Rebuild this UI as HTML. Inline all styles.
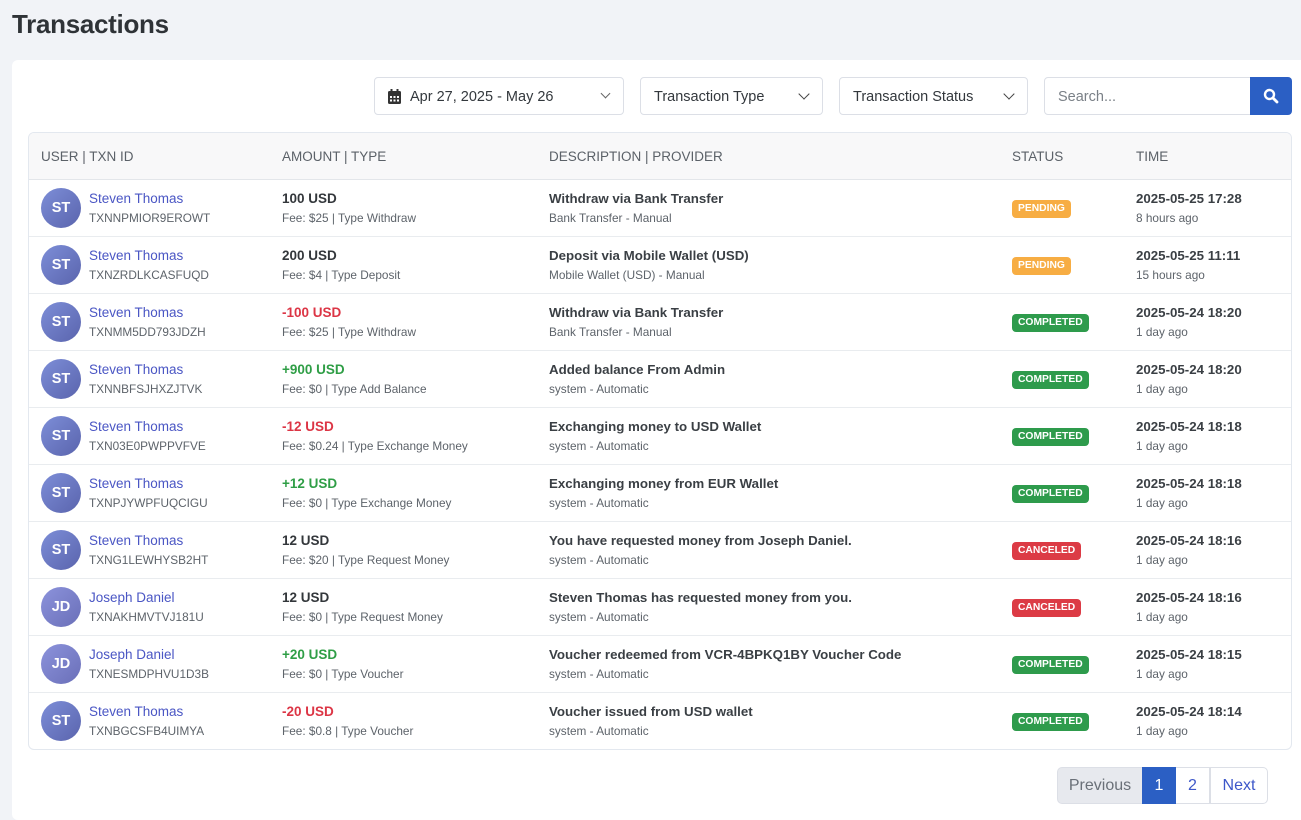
<!DOCTYPE html>
<html><head><meta charset="utf-8"><style>
*{box-sizing:border-box;margin:0;padding:0}
body{width:1301px;height:811px;overflow:hidden;background:#f1f3f7;font-family:"Liberation Sans",sans-serif;color:#3a3f45;position:relative}
h1{position:absolute;left:12px;top:9px;font-size:26px;font-weight:700;color:#2f3337;letter-spacing:-0.3px}
.card{position:absolute;left:12px;top:60px;width:1300px;height:760px;background:#fff;border-radius:6px}
.f{position:absolute;top:77px;height:38px;border:1px solid #dcdfe6;border-radius:4px;background:#fff;font-size:14.5px;color:#33383d;line-height:38px;padding-left:13px}
.f .ch{position:absolute;right:14px;top:12px;width:8px;height:8px;border-right:1.6px solid #444;border-bottom:1.6px solid #444;transform:rotate(45deg)}
.tbl{position:absolute;left:28px;top:132px;width:1264px;height:618px;border:1px solid #e3e8ef;border-radius:6px;overflow:hidden}
.hd{height:47px;background:#f8f8f9;border-bottom:1px solid #e3e6ea;position:relative;font-size:13.5px;color:#5b6168}
.hd span{position:absolute;top:16px}
.row{height:57px;border-bottom:1px solid #e9ecef;position:relative}
.row:last-child{border-bottom:none}
.av{position:absolute;left:12px;top:8px;width:40px;height:40px;border-radius:50%;background:linear-gradient(135deg,#7d8ed8,#5a64ad);color:#fff;font-weight:700;font-size:14.5px;text-align:center;line-height:40px}
.c{position:absolute;top:10px;white-space:nowrap}
.t1{font-size:13.5px;line-height:18px}
.t2{font-size:11.8px;line-height:18px;color:#5d636a;margin-top:1px}
.nm{color:#4a56c4}
.b{font-weight:700;color:#33373b}
.d{font-weight:600;color:#3a3f44;font-size:13.3px}
.g{color:#2f9e46;font-weight:700}
.r{color:#dc3545;font-weight:700}
.bd{position:absolute;left:983px;top:20px;height:18px;padding:0 6px;border-radius:4px;color:#fff;font-size:10.3px;font-weight:700;line-height:18px}
.P{background:#f7ad43}.C{background:#2e9b4c}.X{background:#dc3b45}
.pg{position:absolute;top:767px;height:37px;border:1px solid #dcdfe6;font-size:16px;line-height:35px;text-align:center;color:#3d57c9}
</style></head><body>
<h1>Transactions</h1>
<div class="card"></div>
<div class="f" style="left:374px;width:250px;padding-left:35px"><svg style="position:absolute;left:13px;top:11px" width="13" height="15" viewBox="0 0 13 15"><rect x="0" y="2" width="13" height="13" rx="1.5" fill="#333"/><rect x="2.5" y="0" width="2" height="4" fill="#333"/><rect x="8.5" y="0" width="2" height="4" fill="#333"/><g fill="#fff"><rect x="2" y="7" width="2" height="2"/><rect x="5.5" y="7" width="2" height="2"/><rect x="9" y="7" width="2" height="2"/><rect x="2" y="10.5" width="2" height="2"/><rect x="5.5" y="10.5" width="2" height="2"/><rect x="9" y="10.5" width="2" height="2"/></g></svg>Apr 27, 2025 - May 26<span class="ch" style="border-color:#666;width:7px;height:7px;border-width:0 1.2px 1.2px 0"></span></div>
<div class="f" style="left:640px;width:183px">Transaction Type<span class="ch"></span></div>
<div class="f" style="left:839px;width:189px">Transaction Status<span class="ch"></span></div>
<div class="f" style="left:1044px;width:210px;color:#7a8087;border-radius:4px 0 0 4px">Search...</div>
<div style="position:absolute;left:1250px;top:77px;width:42px;height:38px;background:#2b5fc4;border-radius:0 4px 4px 0"><svg style="position:absolute;left:13px;top:11px" width="16" height="16" viewBox="0 0 16 16"><circle cx="6.5" cy="6.5" r="4.5" stroke="#fff" stroke-width="2.4" fill="none"/><line x1="10" y1="10" x2="14" y2="14" stroke="#fff" stroke-width="2.8" stroke-linecap="round"/></svg></div>
<div class="tbl">
<div class="hd"><span style="left:12px">USER | TXN ID</span><span style="left:253px">AMOUNT | TYPE</span><span style="left:520px">DESCRIPTION | PROVIDER</span><span style="left:983px">STATUS</span><span style="left:1107px">TIME</span></div>
<div class="row"><div class="av">ST</div><div class="c" style="left:60px"><div class="t1 nm">Steven Thomas</div><div class="t2">TXNNPMIOR9EROWT</div></div><div class="c" style="left:253px"><div class="t1 b">100 USD</div><div class="t2">Fee: $25 | Type Withdraw</div></div><div class="c" style="left:520px"><div class="t1 d">Withdraw via Bank Transfer</div><div class="t2">Bank Transfer - Manual</div></div><span class="bd P">PENDING</span><div class="c" style="left:1107px"><div class="t1 d">2025-05-25 17:28</div><div class="t2">8 hours ago</div></div></div>
<div class="row"><div class="av">ST</div><div class="c" style="left:60px"><div class="t1 nm">Steven Thomas</div><div class="t2">TXNZRDLKCASFUQD</div></div><div class="c" style="left:253px"><div class="t1 b">200 USD</div><div class="t2">Fee: $4 | Type Deposit</div></div><div class="c" style="left:520px"><div class="t1 d">Deposit via Mobile Wallet (USD)</div><div class="t2">Mobile Wallet (USD) - Manual</div></div><span class="bd P">PENDING</span><div class="c" style="left:1107px"><div class="t1 d">2025-05-25 11:11</div><div class="t2">15 hours ago</div></div></div>
<div class="row"><div class="av">ST</div><div class="c" style="left:60px"><div class="t1 nm">Steven Thomas</div><div class="t2">TXNMM5DD793JDZH</div></div><div class="c" style="left:253px"><div class="t1 r">-100 USD</div><div class="t2">Fee: $25 | Type Withdraw</div></div><div class="c" style="left:520px"><div class="t1 d">Withdraw via Bank Transfer</div><div class="t2">Bank Transfer - Manual</div></div><span class="bd C">COMPLETED</span><div class="c" style="left:1107px"><div class="t1 d">2025-05-24 18:20</div><div class="t2">1 day ago</div></div></div>
<div class="row"><div class="av">ST</div><div class="c" style="left:60px"><div class="t1 nm">Steven Thomas</div><div class="t2">TXNNBFSJHXZJTVK</div></div><div class="c" style="left:253px"><div class="t1 g">+900 USD</div><div class="t2">Fee: $0 | Type Add Balance</div></div><div class="c" style="left:520px"><div class="t1 d">Added balance From Admin</div><div class="t2">system - Automatic</div></div><span class="bd C">COMPLETED</span><div class="c" style="left:1107px"><div class="t1 d">2025-05-24 18:20</div><div class="t2">1 day ago</div></div></div>
<div class="row"><div class="av">ST</div><div class="c" style="left:60px"><div class="t1 nm">Steven Thomas</div><div class="t2">TXN03E0PWPPVFVE</div></div><div class="c" style="left:253px"><div class="t1 r">-12 USD</div><div class="t2">Fee: $0.24 | Type Exchange Money</div></div><div class="c" style="left:520px"><div class="t1 d">Exchanging money to USD Wallet</div><div class="t2">system - Automatic</div></div><span class="bd C">COMPLETED</span><div class="c" style="left:1107px"><div class="t1 d">2025-05-24 18:18</div><div class="t2">1 day ago</div></div></div>
<div class="row"><div class="av">ST</div><div class="c" style="left:60px"><div class="t1 nm">Steven Thomas</div><div class="t2">TXNPJYWPFUQCIGU</div></div><div class="c" style="left:253px"><div class="t1 g">+12 USD</div><div class="t2">Fee: $0 | Type Exchange Money</div></div><div class="c" style="left:520px"><div class="t1 d">Exchanging money from EUR Wallet</div><div class="t2">system - Automatic</div></div><span class="bd C">COMPLETED</span><div class="c" style="left:1107px"><div class="t1 d">2025-05-24 18:18</div><div class="t2">1 day ago</div></div></div>
<div class="row"><div class="av">ST</div><div class="c" style="left:60px"><div class="t1 nm">Steven Thomas</div><div class="t2">TXNG1LEWHYSB2HT</div></div><div class="c" style="left:253px"><div class="t1 b">12 USD</div><div class="t2">Fee: $20 | Type Request Money</div></div><div class="c" style="left:520px"><div class="t1 d">You have requested money from Joseph Daniel.</div><div class="t2">system - Automatic</div></div><span class="bd X">CANCELED</span><div class="c" style="left:1107px"><div class="t1 d">2025-05-24 18:16</div><div class="t2">1 day ago</div></div></div>
<div class="row"><div class="av" style="background:linear-gradient(135deg,#8c93dc,#6a6fb8)">JD</div><div class="c" style="left:60px"><div class="t1 nm">Joseph Daniel</div><div class="t2">TXNAKHMVTVJ181U</div></div><div class="c" style="left:253px"><div class="t1 b">12 USD</div><div class="t2">Fee: $0 | Type Request Money</div></div><div class="c" style="left:520px"><div class="t1 d">Steven Thomas has requested money from you.</div><div class="t2">system - Automatic</div></div><span class="bd X">CANCELED</span><div class="c" style="left:1107px"><div class="t1 d">2025-05-24 18:16</div><div class="t2">1 day ago</div></div></div>
<div class="row"><div class="av" style="background:linear-gradient(135deg,#8c93dc,#6a6fb8)">JD</div><div class="c" style="left:60px"><div class="t1 nm">Joseph Daniel</div><div class="t2">TXNESMDPHVU1D3B</div></div><div class="c" style="left:253px"><div class="t1 g">+20 USD</div><div class="t2">Fee: $0 | Type Voucher</div></div><div class="c" style="left:520px"><div class="t1 d">Voucher redeemed from VCR-4BPKQ1BY Voucher Code</div><div class="t2">system - Automatic</div></div><span class="bd C">COMPLETED</span><div class="c" style="left:1107px"><div class="t1 d">2025-05-24 18:15</div><div class="t2">1 day ago</div></div></div>
<div class="row"><div class="av">ST</div><div class="c" style="left:60px"><div class="t1 nm">Steven Thomas</div><div class="t2">TXNBGCSFB4UIMYA</div></div><div class="c" style="left:253px"><div class="t1 r">-20 USD</div><div class="t2">Fee: $0.8 | Type Voucher</div></div><div class="c" style="left:520px"><div class="t1 d">Voucher issued from USD wallet</div><div class="t2">system - Automatic</div></div><span class="bd C">COMPLETED</span><div class="c" style="left:1107px"><div class="t1 d">2025-05-24 18:14</div><div class="t2">1 day ago</div></div></div>
</div>
<div class="pg" style="left:1057px;width:86px;background:#e7e9ee;color:#6a7078;border-radius:5px 0 0 5px">Previous</div>
<div class="pg" style="left:1142px;width:34px;background:#2b5fc4;border-color:#2b5fc4;color:#fff">1</div>
<div class="pg" style="left:1176px;width:34px;background:#fff;border-left:none">2</div>
<div class="pg" style="left:1210px;width:58px;background:#fff;border-radius:0 5px 5px 0">Next</div>
</body></html>
